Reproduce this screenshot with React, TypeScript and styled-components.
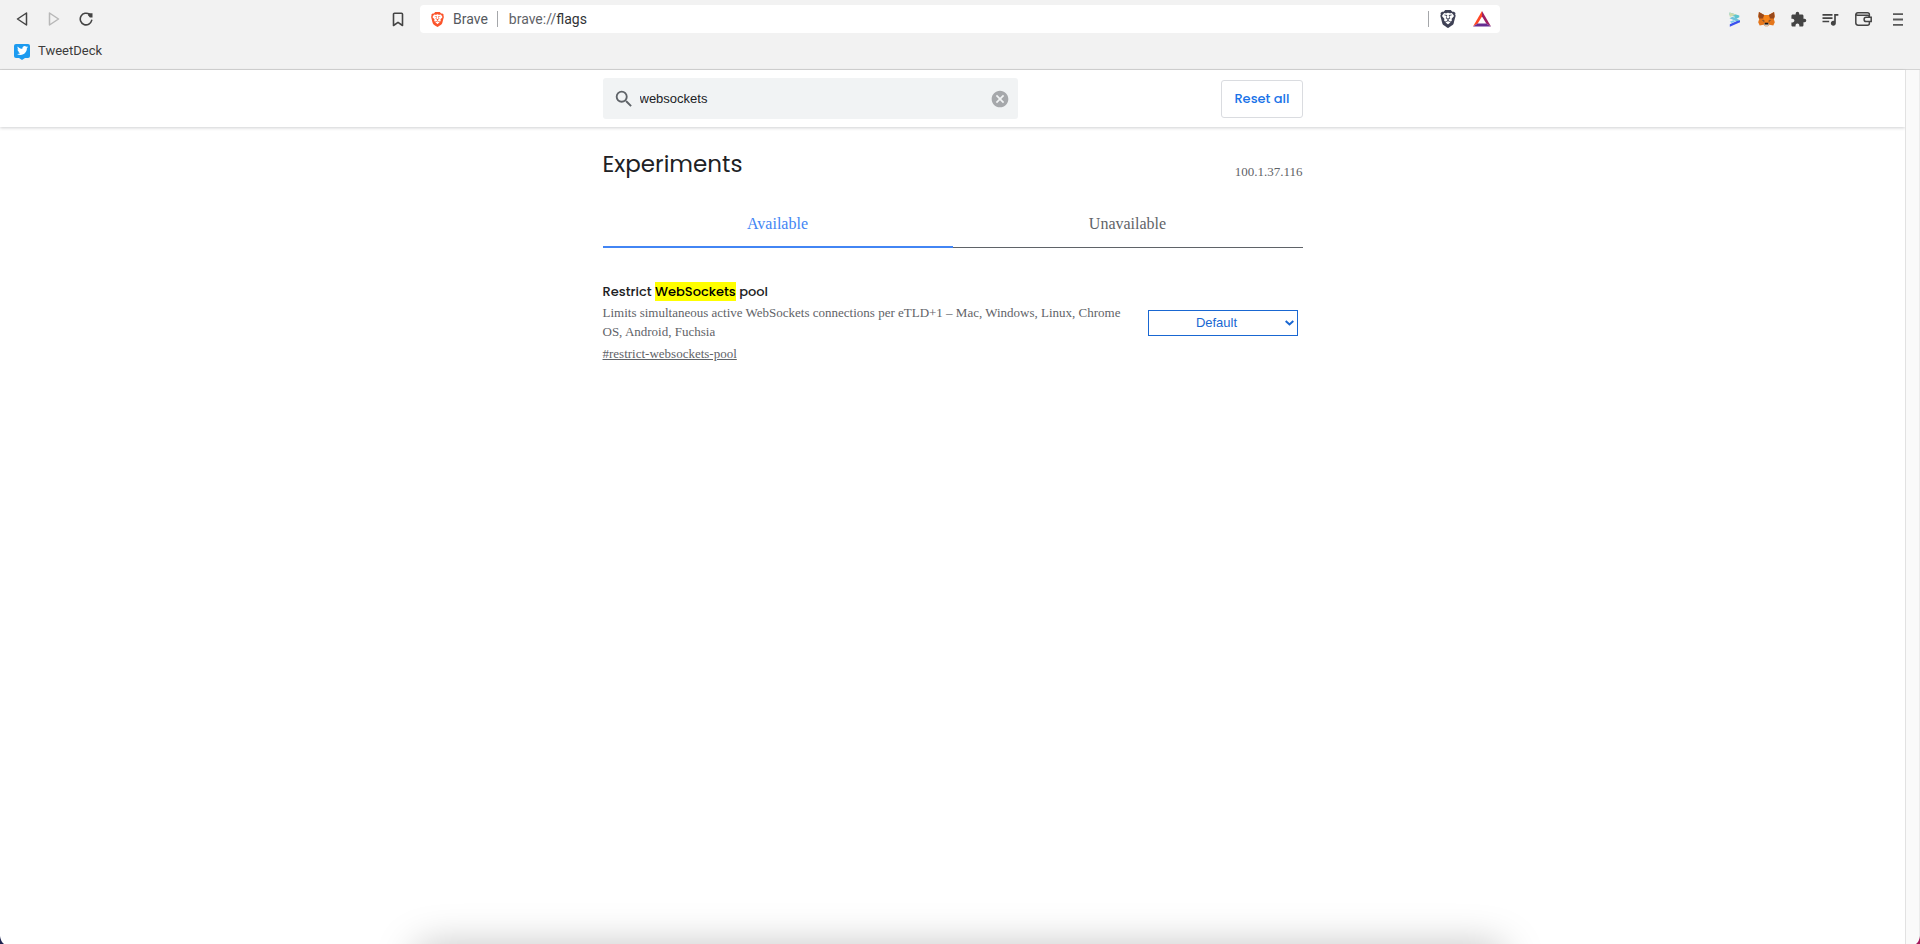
import React from "react";
import styled, { createGlobalStyle } from "styled-components";
import { MdExtension, MdQueueMusic, MdSearch, MdCancel } from "react-icons/md";
import { FaTwitter } from "react-icons/fa";
import { SiBrave } from "react-icons/si";

const UI = `Roboto, "Liberation Sans", sans-serif`;
const SANS = `"Liberation Sans", Arial, sans-serif`;
const SERIF = `"Liberation Serif", "Times New Roman", serif`;
const DISPLAY = `Poppins, Inter, sans-serif`;

const GlobalStyle = createGlobalStyle`
  * { box-sizing: border-box; }
  body { margin: 0; background: #fff; color: #202124; font-family: ${SERIF}; font-size: 13px; }
  button, input, select { font: inherit; color: inherit; margin: 0; }
  svg { display: block; flex: none; }
`;

const Window = styled.div`
  position: relative;
  min-height: 100vh;
  display: flex;
  flex-direction: column;
  overflow: hidden;
`;

const BrowserChrome = styled.div`
  background: #f2f2f2;
  border-bottom: 1px solid #d4d4d4;
  font-family: ${UI};
`;

const Toolbar = styled.div`
  display: grid;
  grid-template-columns: 1fr minmax(0, 1080px) 1fr;
  align-items: center;
  height: 38px;
`;

const ToolGroup = styled.div<{ $end?: boolean }>`
  display: flex;
  align-items: center;
  justify-content: ${(p) => (p.$end ? "flex-end" : "flex-start")};
  padding: ${(p) => (p.$end ? "0 5px 0 0" : "0 6px")};
`;

const IconButton = styled.button<{ $width?: number; $color?: string; $push?: boolean }>`
  display: flex;
  align-items: center;
  justify-content: center;
  width: ${(p) => p.$width ?? 32}px;
  height: 28px;
  padding: 0;
  border: 0;
  background: none;
  color: ${(p) => p.$color ?? "#444"};
  margin-left: ${(p) => (p.$push ? "auto" : "0")};
`;

const AddressBar = styled.div`
  display: flex;
  align-items: center;
  height: 28px;
  padding: 0 2px 0 8px;
  border-radius: 4px;
  background: #fff;
  font-size: 14px;
  color: #5f6368;
`;

const SiteButton = styled.button`
  display: flex;
  align-items: center;
  gap: 8px;
  padding: 0 9px 0 2px;
  border: 0;
  background: none;
  color: #55595e;
`;

const Rule = styled.span`
  width: 1px;
  height: 16px;
  background: #a5a7aa;
`;

const Scheme = styled.label`
  padding-left: 11px;
`;

const AddressInput = styled.input`
  flex: 1;
  min-width: 0;
  padding: 0;
  border: 0;
  outline: 0;
  background: none;
  color: #303236;
`;

const BookmarksBar = styled.nav`
  display: flex;
  align-items: center;
  height: 31px;
  padding: 0 14px 6px;
`;

const Bookmark = styled.a`
  display: flex;
  align-items: center;
  gap: 8px;
  font-size: 13px;
  color: #3c3c3c;
  text-decoration: none;
`;

const BirdBubble = styled.span`
  position: relative;
  display: grid;
  place-items: center;
  width: 16px;
  height: 14px;
  border-radius: 2px;
  background: #1d9bf0;
  color: #fff;

  &::after {
    content: "";
    position: absolute;
    left: 5px;
    top: 100%;
    border: 3px solid transparent;
    border-top: 2px solid #1d9bf0;
    border-bottom: 0;
  }
`;

const Viewport = styled.div`
  flex: 1;
  display: flex;
`;

const Page = styled.main`
  flex: 1;
  min-width: 0;
`;

const ScrollTrack = styled.div`
  width: 15px;
  background: #fafafa;
  border-left: 1px solid #e2e2e2;
  border-right: 1px solid #ececec;
`;

const SearchHeader = styled.header`
  padding: 8px 0;
  box-shadow: 0 1px 3px rgba(60, 64, 67, 0.24);
`;

const Column = styled.div`
  width: 100%;
  max-width: 700px;
  margin: 0 auto;
`;

const HeaderRow = styled(Column)`
  display: flex;
  align-items: center;
  justify-content: space-between;
`;

const SearchField = styled.label`
  display: flex;
  align-items: center;
  width: 415px;
  height: 41px;
  padding: 0 8px 0 10px;
  border-radius: 3px;
  background: #f1f3f4;
  color: #5f6368;
`;

const SearchInput = styled.input`
  flex: 1;
  min-width: 0;
  padding: 0 5px;
  border: 0;
  outline: 0;
  background: none;
  font-family: ${SANS};
  font-size: 13px;
  color: #202124;
`;

const ClearButton = styled.button`
  padding: 0;
  border: 0;
  background: none;
  color: #a6a8ab;
`;

const ResetButton = styled.button`
  height: 38px;
  padding: 0 12px;
  border: 1px solid #dadce0;
  border-radius: 3px;
  background: #fff;
  color: #1a73e8;
  font-family: ${DISPLAY};
  font-size: 13px;
  font-weight: 500;
`;

const TitleRow = styled.div`
  display: flex;
  align-items: flex-end;
  justify-content: space-between;
  padding-top: 20px;
`;

const Heading = styled.h1`
  margin: 0;
  font-family: ${DISPLAY};
  font-size: 23px;
  line-height: 34px;
  font-weight: 400;
`;

const Version = styled.span`
  line-height: 19px;
  color: #5f6368;
`;

const Tabs = styled.div`
  display: flex;
  margin-top: 24px;
`;

const Tab = styled.button<{ $active?: boolean }>`
  flex: 1;
  height: 43px;
  padding: 0 0 4px;
  border: 0;
  border-bottom: ${(p) => (p.$active ? "2px solid #4285f4" : "1px solid #5f6368")};
  background: none;
  color: ${(p) => (p.$active ? "#4285f4" : "#5f6368")};
  font-size: 16px;
`;

const Experiment = styled.section`
  display: flex;
  align-items: center;
  justify-content: space-between;
  padding: 34px 5px 0 0;
`;

const Details = styled.div`
  width: 530px;
  color: #5f6368;
`;

const Name = styled.h2`
  margin: 0 0 1px;
  font-family: ${DISPLAY};
  font-size: 13px;
  line-height: 20px;
  font-weight: 500;
  color: #202124;
`;

const Mark = styled.mark`
  background: #ff0;
  color: #000;
`;

const Description = styled.p`
  margin: 0 0 3px;
  line-height: 19px;
`;

const Permalink = styled.a`
  color: #5f6368;
  line-height: 19px;
`;

const SelectBox = styled.div`
  position: relative;
  width: 150px;
  color: #1967d2;
`;

const Select = styled.select`
  appearance: none;
  display: block;
  width: 100%;
  height: 26px;
  padding: 0 12px 0 0;
  border: 1px solid #1967d2;
  border-radius: 0;
  background: #fff;
  font-family: ${SANS};
  font-size: 13px;
  text-align: center;
  text-align-last: center;
`;

const Chevron = styled.svg`
  position: absolute;
  right: 4px;
  top: 10px;
  pointer-events: none;
`;

const DockShadow = styled.div`
  position: absolute;
  left: 22%;
  right: 22%;
  bottom: -24px;
  height: 20px;
  border-radius: 20px;
  box-shadow: 0 6px 40px 8px rgba(0, 0, 0, 0.26);
  pointer-events: none;
`;

const Corner = styled.svg<{ $right?: boolean }>`
  position: absolute;
  bottom: 0;
  ${(p) => (p.$right ? "right: 0;" : "left: 0;")}
`;

const Triangle = ({ flip }: { flip?: boolean }) => (
  <svg width="12" height="14" viewBox="0 0 12 14" fill="none" stroke="currentColor" strokeWidth="1.5" strokeLinejoin="round">
    <path d={flip ? "M1.5 1v12L10.5 7z" : "M10.5 1v12L1.5 7z"} />
  </svg>
);

const Reload = () => (
  <svg width="14" height="14" viewBox="0 0 14 14" fill="none" stroke="currentColor" strokeWidth="1.6">
    <path d="M10.6 2.4A5.8 5.8 0 1 0 12.7 8.4" strokeLinecap="round" />
    <path d="M9.2 1.2h4.3v4.2h-2.6L9.2 3.6z" fill="currentColor" stroke="none" />
  </svg>
);

const BookmarkIcon = () => (
  <svg width="12" height="15" viewBox="0 0 12 15" fill="none" stroke="currentColor" strokeWidth="1.6" strokeLinejoin="round">
    <path d="M1.5 2.2a1 1 0 0 1 1-1h7a1 1 0 0 1 1 1v11.3L6 10.3l-4.5 3.2z" />
  </svg>
);

const BatIcon = () => (
  <svg width="18" height="16" viewBox="0 0 18 16">
    <path d="M9 0v5.4L4.7 12.6 0 15.5z" fill="#ff4724" />
    <path d="M9 0l9 15.5-4.7-2.9L9 5.4z" fill="#9e1f63" />
    <path d="M0 15.5l4.7-2.9h8.6l4.7 2.9z" fill="#662d91" />
  </svg>
);

const SwapIcon = () => (
  <svg width="14" height="15" viewBox="-2 0 14 15">
    <path d="M.5.5l9.8 2.9v1.8L7 6.9 4.8 6l1.6-1.1L.5 3z" fill="#5cc4cf" />
    <path d="M.5.5L7 2.400 1.500 4.800.5 4.300z" fill="#cfdcae" />
    <path d="M.5 6.200l3-1.500L11 8.200v2L8 9.600z" fill="#6fc3dc" />
    <path d="M.8 9.800l3.600-1.500 1.800.9-3.400 1.900z" fill="#7cc9ee" />
    <path d="M11 8.600v1.600L.8 14.800v-2.500L8 9z" fill="#3a50ee" />
  </svg>
);

const FoxIcon = () => (
  <svg width="17" height="16" viewBox="0 0 18 16">
    <path d="M1 0.5L6.6 3.8h4.8L17 .5l.8 5-1 2.7 1 3.3-1.6 3.4-4-.8-1.7 1.6h-3L5.8 14.1l-4 .8L.2 11.5l1-3.3-1-2.7z" fill="#e4761b" />
    <path d="M1 .5l5.6 3.3L5 7.6H1.2L.5 5zM17 .5l-5.6 3.3L13 7.6h3.8l.7-2.6z" fill="#98491c" />
    <path d="M6.6 3.8h4.8L12 8l-1 3.4H7L6 8z" fill="#f6851b" />
    <path d="M4 9.2l3 .6-.5 1.2zM14 9.2l-3 .6.5 1.2z" fill="#233447" />
    <path d="M6 14l1-1.8h4L12 14l-1.7 1.7H7.7z" fill="#d8c8bb" />
    <path d="M7.2 12h3.6l.4 1.8H6.8z" fill="#161616" />
  </svg>
);

const WalletIcon = () => (
  <svg width="17" height="14" viewBox="0 0 17 14" fill="none" stroke="currentColor" strokeWidth="1.5">
    <path d="M14.4 5.2V2.8a2 2 0 0 0-2-2H2.8a2 2 0 0 0-2 2v8a2.4 2.4 0 0 0 2.4 2.4h9.2a2 2 0 0 0 2-2V9.5" />
    <path d="M.8 2.4c.3.7 1 .9 2 .9h9.600a2 2 0 0 1 2 2" />
    <path d="M16.2 5.3h-5a2.1 2.1 0 0 0 0 4.2h5z" />
  </svg>
);

const MenuIcon = () => (
  <svg width="10" height="13" viewBox="0 0 10 13" stroke="currentColor" strokeWidth="1.8">
    <path d="M0 1.2h10M0 6.5h10M0 11.800h10" />
  </svg>
);

export default function App() {
  return (
    <Window>
      <GlobalStyle />
      <BrowserChrome>
        <Toolbar>
          <ToolGroup>
            <IconButton aria-label="Back"><Triangle /></IconButton>
            <IconButton aria-label="Forward" $color="#b8b8b8"><Triangle flip /></IconButton>
            <IconButton aria-label="Reload"><Reload /></IconButton>
            <IconButton aria-label="Bookmark this page" $push><BookmarkIcon /></IconButton>
          </ToolGroup>
          <AddressBar>
            <SiteButton>
              <SiBrave size={15} color="#fb542b" />
              Brave
            </SiteButton>
            <Rule />
            <Scheme htmlFor="address">brave://</Scheme>
            <AddressInput id="address" defaultValue="flags" />
            <Rule />
            <IconButton aria-label="Shields" $width={37} $color="#3f4155"><SiBrave size={18} /></IconButton>
            <IconButton aria-label="Rewards"><BatIcon /></IconButton>
          </AddressBar>
          <ToolGroup $end>
            <IconButton aria-label="Swap extension"><SwapIcon /></IconButton>
            <IconButton aria-label="Fox wallet extension"><FoxIcon /></IconButton>
            <IconButton aria-label="Extensions"><MdExtension size={17} /></IconButton>
            <IconButton aria-label="Media controls"><MdQueueMusic size={20} /></IconButton>
            <IconButton aria-label="Wallet" $width={35}><WalletIcon /></IconButton>
            <IconButton aria-label="Menu" $width={34} $color="#5a5a5a"><MenuIcon /></IconButton>
          </ToolGroup>
        </Toolbar>
        <BookmarksBar>
          <Bookmark href="#tweetdeck">
            <BirdBubble><FaTwitter size={11} /></BirdBubble>
            TweetDeck
          </Bookmark>
        </BookmarksBar>
      </BrowserChrome>

      <Viewport>
        <Page>
          <SearchHeader>
            <HeaderRow>
              <SearchField>
                <MdSearch size={22} />
                <SearchInput aria-label="Search flags" defaultValue="websockets" />
                <ClearButton aria-label="Clear search"><MdCancel size={20} /></ClearButton>
              </SearchField>
              <ResetButton>Reset all</ResetButton>
            </HeaderRow>
          </SearchHeader>

          <Column>
            <TitleRow>
              <Heading>Experiments</Heading>
              <Version>100.1.37.116</Version>
            </TitleRow>
            <Tabs role="tablist">
              <Tab role="tab" aria-selected="true" $active>Available</Tab>
              <Tab role="tab" aria-selected="false">Unavailable</Tab>
            </Tabs>
            <Experiment>
              <Details>
                <Name>Restrict <Mark>WebSockets</Mark> pool</Name>
                <Description>
                  Limits simultaneous active WebSockets connections per eTLD+1 – Mac, Windows, Linux, Chrome OS, Android, Fuchsia
                </Description>
                <Permalink href="#restrict-websockets-pool">#restrict-websockets-pool</Permalink>
              </Details>
              <SelectBox>
                <Select aria-label="Restrict WebSockets pool" defaultValue="Default">
                  <option>Default</option>
                  <option>Enabled</option>
                  <option>Disabled</option>
                </Select>
                <Chevron width="9" height="6" viewBox="0 0 9 6" fill="none" stroke="currentColor" strokeWidth="2">
                  <path d="M.7 1l3.8 3.4L8.3 1" />
                </Chevron>
              </SelectBox>
            </Experiment>
          </Column>
        </Page>
        <ScrollTrack />
      </Viewport>

      <DockShadow />
      <Corner width="4" height="8" viewBox="0 0 4 8"><path d="M0 0q.5 5 4 8H0z" fill="#1e2350" /></Corner>
      <Corner $right width="4" height="8" viewBox="0 0 4 8"><path d="M4 0q-.5 5-4 8h4z" fill="#a3195b" /></Corner>
    </Window>
  );
}
